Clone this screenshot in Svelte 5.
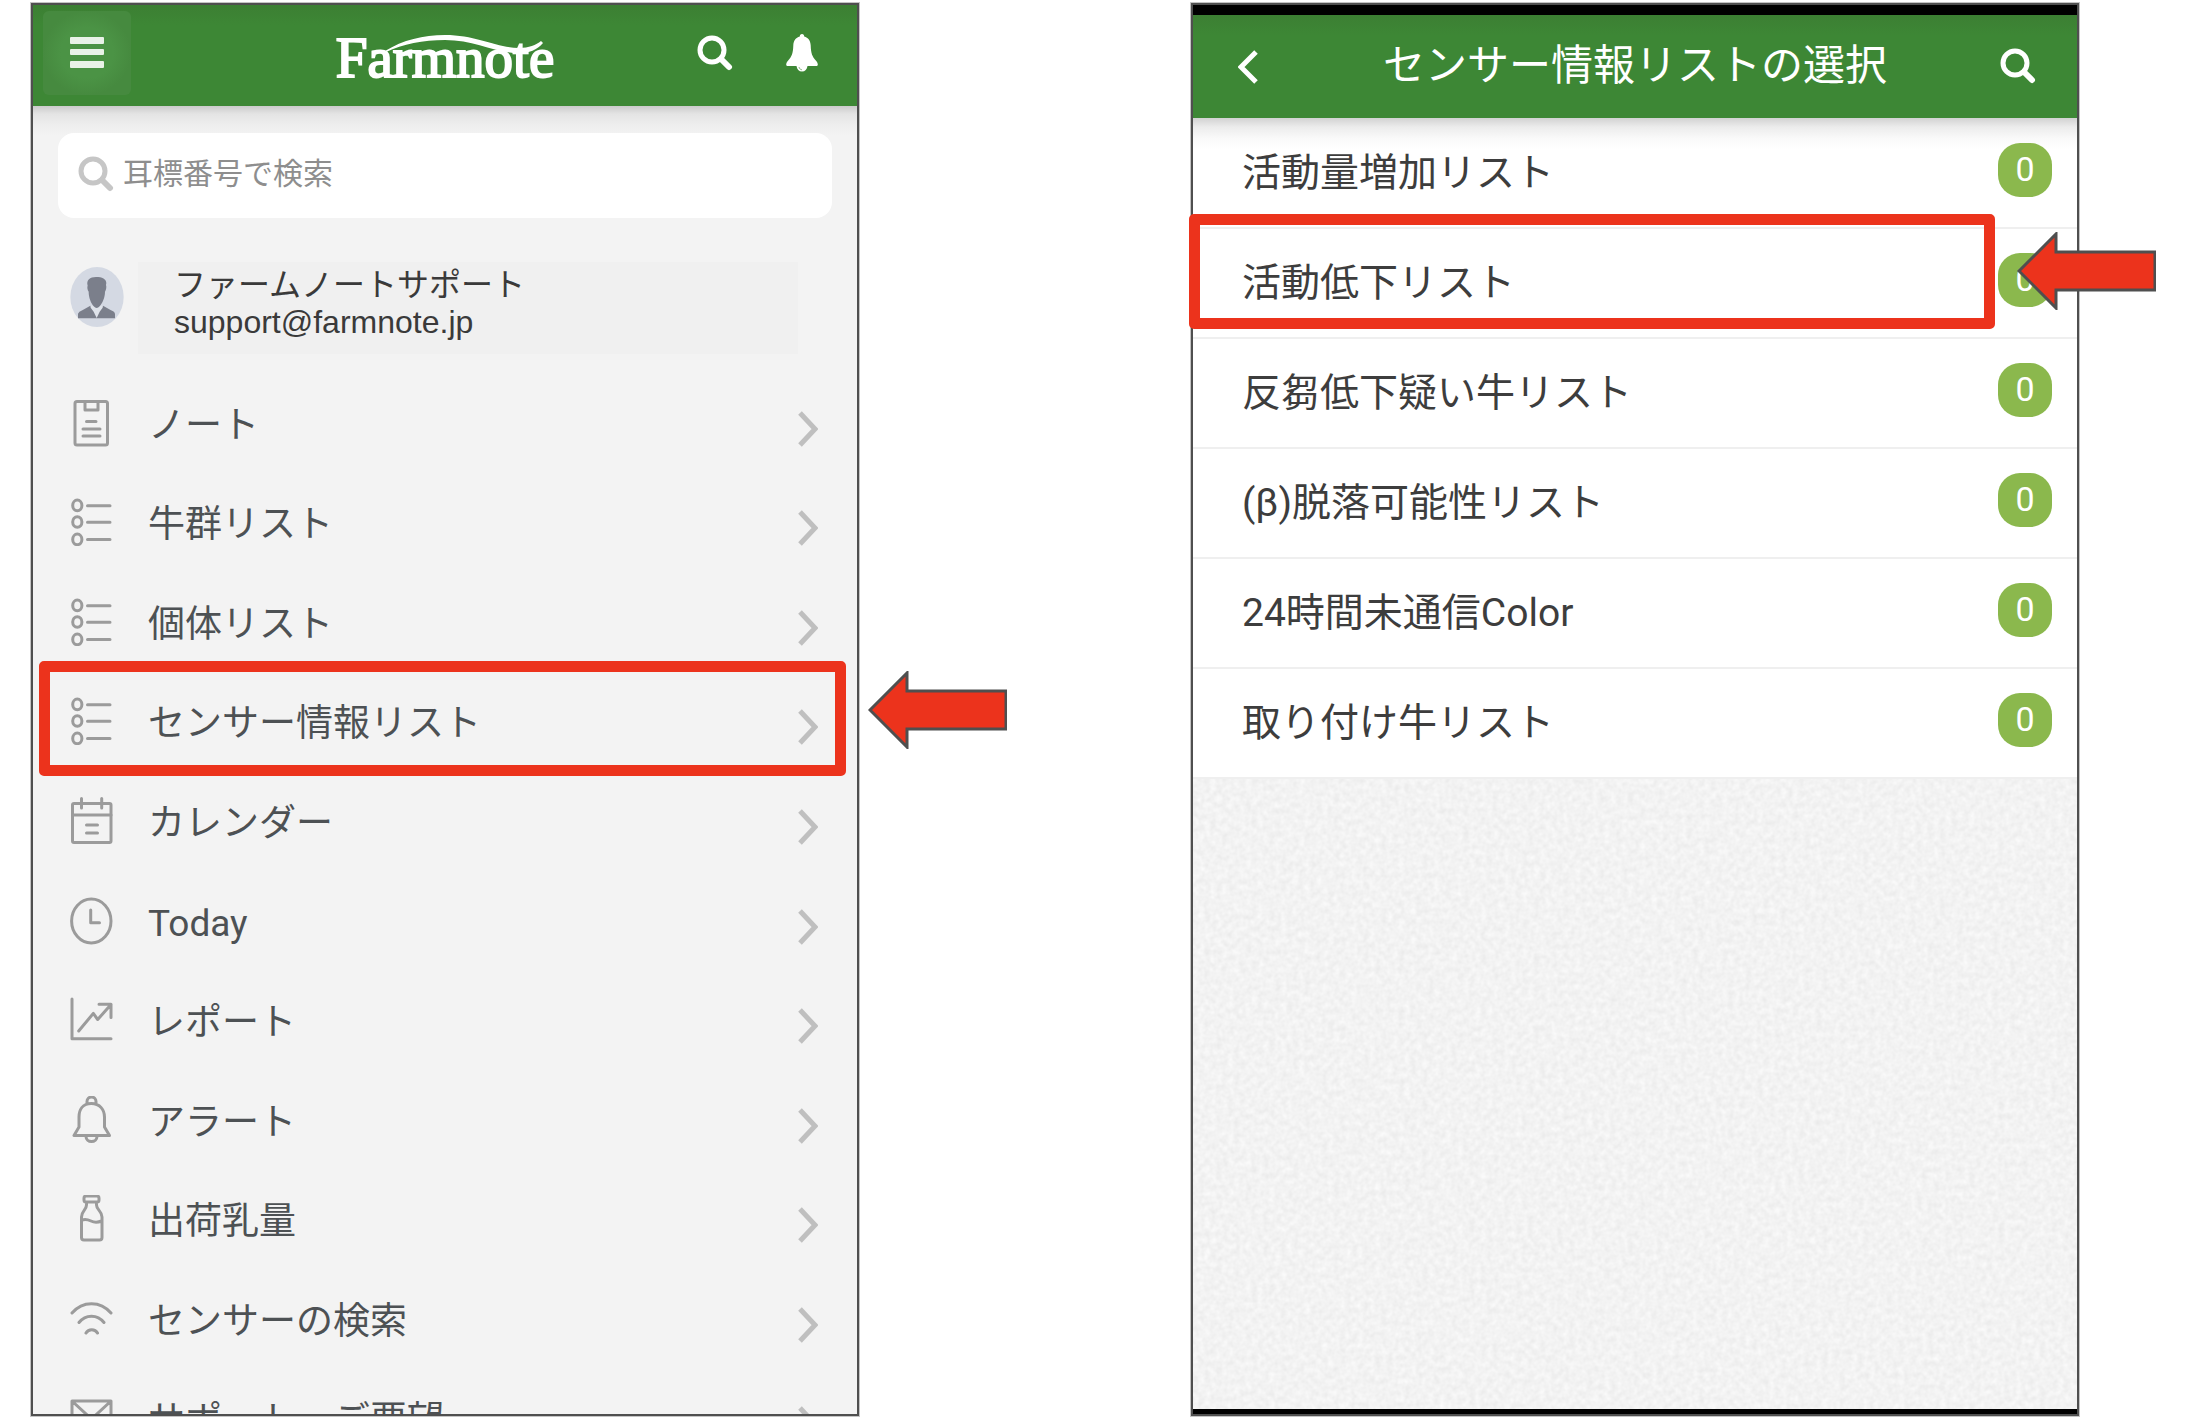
<script>
  const menu = [
    { id: 'note', icon: 'note', label: 'ノート' },
    { id: 'herds', icon: 'list', label: '牛群リスト' },
    { id: 'cattle', icon: 'list', label: '個体リスト' },
    { id: 'sensor-lists', icon: 'list', label: 'センサー情報リスト', marked: true },
    { id: 'calendar', icon: 'calendar', label: 'カレンダー' },
    { id: 'today', icon: 'clock', label: 'Today' },
    { id: 'report', icon: 'chart', label: 'レポート' },
    { id: 'alert', icon: 'bell', label: 'アラート' },
    { id: 'milk', icon: 'bottle', label: '出荷乳量' },
    { id: 'sensor-search', icon: 'wifi', label: 'センサーの検索' },
    { id: 'support', icon: 'mail', label: 'サポート・ご要望' }
  ];

  const lists = [
    { id: 'active-up', label: '活動量増加リスト', count: 0 },
    { id: 'active-down', label: '活動低下リスト', count: 0, marked: true },
    { id: 'rumination', label: '反芻低下疑い牛リスト', count: 0 },
    { id: 'detached', label: '(β)脱落可能性リスト', count: 0 },
    { id: 'offline', label: '24時間未通信Color', count: 0 },
    { id: 'attached', label: '取り付け牛リスト', count: 0 }
  ];
</script>

{#snippet arrow()}
  <svg class="arrow" viewBox="0 0 139 78" aria-hidden="true">
    <path d="M2 39 L39 2 V20 H138 V58 H39 V76 Z" fill="#ec331c" stroke="#4f4f4f" stroke-width="3" />
  </svg>
{/snippet}

{#snippet magnifier()}
  <svg class="magnifier" viewBox="0 0 36 36" aria-hidden="true">
    <circle cx="15" cy="15" r="12" fill="none" stroke="currentColor" stroke-width="5" />
    <path d="M24 24 L32 32" stroke="currentColor" stroke-width="6" stroke-linecap="round" />
  </svg>
{/snippet}

<div class="page">
  <section class="phone home">
    <header class="bar">
      <button class="burger" type="button" aria-label="メニュー">
        <svg viewBox="0 0 34 32" aria-hidden="true">
          <path d="M1 0h32a1 1 0 0 1 1 1v5a1 1 0 0 1-1 1H1a1 1 0 0 1-1-1V1a1 1 0 0 1 1-1zM1 12h32a1 1 0 0 1 1 1v4a1 1 0 0 1-1 1H1a1 1 0 0 1-1-1v-4a1 1 0 0 1 1-1zM1 24h32a1 1 0 0 1 1 1v5a1 1 0 0 1-1 1H1a1 1 0 0 1-1-1v-5a1 1 0 0 1 1-1z" />
        </svg>
      </button>
      <div class="brand">
        Farmnote
        <svg class="swoosh" viewBox="0 0 160 18" aria-hidden="true">
          <path d="M0 16 C18 5 38 0 60 0 C92 0 112 13 134 13 C144 13 151 10 156 6 L158 8 C152 15 144 18 134 18 C110 18 90 5 60 5 C38 5 18 9 1 17 Z" fill="#fff" />
        </svg>
      </div>
      <div class="tools">
        <button type="button" aria-label="検索">{@render magnifier()}</button>
        <button type="button" aria-label="お知らせ">
          <svg class="bell" viewBox="0 0 32 38" aria-hidden="true">
            <path d="M16 0c1.500 0 2.200 1 2.200 2.600 4 .9 6.300 4.400 6.500 8.900.3 7.500 1.300 11 5.500 15.500 1.800 1.900 2.400 5 .2 5H21.500c-.4 3.500-2.500 5.500-5.500 5.500s-5.100-2-5.500-5.500H1.600c-2.200 0-1.600-3.100.2-5 4.200-4.500 5.200-8 5.500-15.500.2-4.500 2.500-8 6.500-8.900C13.800 1 14.500 0 16 0z" fill="#fff" />
            <path d="M13 33c.3 1.600 1.300 2.600 3 2.800" fill="none" stroke="#8fb98a" stroke-width="1" />
          </svg>
        </button>
      </div>
    </header>

    <div class="drawer">
      <label class="search">
        {@render magnifier()}
        <input type="search" placeholder="耳標番号で検索" aria-label="耳標番号で検索" />
      </label>

      <div class="profile">
        <svg class="avatar" viewBox="0 0 160 180" aria-hidden="true">
          <ellipse cx="80" cy="90" rx="80" ry="90" fill="#d4d9e3" />
          <path d="M23 154 V140 Q25 134 36 130 L60 116 H98 L122 130 Q133 134 134 141 V154 Z" fill="#7b7f8b" />
          <path d="M60 115 H98 L97 122 L88 134 L79 153 L70 134 L61 122 Z" fill="#dfe3ea" />
          <path d="M52 56 C47 38 60 29 80 30 C98 28 112 40 107 54 C109 60 108 68 104 74 C104 92 96 108 88 118 Q79 128 70 118 C62 108 55 92 55 74 C51 68 50 60 52 56 Z" fill="#7b7f8b" />
        </svg>
        <div class="who">
          <div>ファームノートサポート</div>
          <div class="mail">support@farmnote.jp</div>
        </div>
      </div>

      <nav class="menu">
        {#each menu as item (item.id)}
          <a class="item" href={'#' + item.id}>
            <svg class="icon" viewBox="0 0 44 48" aria-hidden="true">
              {#if item.icon === 'note'}
                <rect x="5" y="2.500" width="32.500" height="43.500" rx="2" />
                <path d="M15 3V11H28V3M16.500 22.500H26M13 30H30M13 37H30" />
              {:else if item.icon === 'list'}
                <ellipse cx="7.300" cy="7.400" rx="4.600" ry="5.300" />
                <ellipse cx="7.300" cy="24" rx="4.600" ry="5.300" />
                <ellipse cx="7.300" cy="41.400" rx="4.600" ry="5.300" />
                <path d="M17.500 7.700H40M17.500 24.300H40M17.500 41.500H40" />
              {:else if item.icon === 'calendar'}
                <rect x="2.500" y="6.500" width="38.500" height="39" rx="1.500" />
                <path d="M2.500 18H41M11.500 1.500V11M31.700 1.500V11M16.500 28H27.500M16.500 36H27.500" />
              {:else if item.icon === 'clock'}
                <ellipse cx="21.300" cy="24" rx="19.700" ry="22" />
                <path d="M20.700 13V25.700H29.500" />
              {:else if item.icon === 'chart'}
                <path d="M2 3V42.700H41M8.700 35L23.300 17.400L27.700 23.500L41 8.500M29 8.300H41V21.500" />
              {:else if item.icon === 'bell'}
                <path d="M21.300 7.500C12.500 7.500 9 14 9 21V31L4 39.500H39.500L34.500 31V21C34.500 14 30 7.500 21.300 7.500ZM17 8V5.500A4.500 4.500 0 0 1 26 5.500V8M16 40.500A5.500 5 0 0 0 27 40.500" />
              {:else if item.icon === 'bottle'}
                <path d="M16 1H27Q29 1 29 3V5Q29 7 27 7H16Q14 7 14 5V3Q14 1 16 1ZM16.500 7V10C16.500 15 11.500 16 11.500 22V42.500Q11.500 45 14 45H29.500Q32 45 32 42.500V22C32 16 26.500 15 26.500 10V7M12 25C15.500 23.500 18 24.500 21 26C24 27.500 28 27.500 31.500 26" />
              {:else if item.icon === 'wifi'}
                <path d="M2 18C12.500 5.500 30.500 5.500 41 18M9 27.500C15.500 19 27.500 19 34 27.500M16 38C18.500 33.500 25 33.500 27.500 38" />
              {:else}
                <path d="M2 7H41V42H2ZM2.500 7.500L21.500 25L40.500 7.500" />
              {/if}
            </svg>
            <span class="label">{item.label}</span>
            <svg class="next" viewBox="0 0 20 36" aria-hidden="true"><path d="M2 2L17 18L2 34" /></svg>
            {#if item.marked}
              <span class="mark"></span>
              {@render arrow()}
            {/if}
          </a>
        {/each}
      </nav>
    </div>
  </section>

  <section class="phone picker">
    <header class="bar">
      <button type="button" aria-label="戻る">
        <svg class="back" viewBox="0 0 20 34" aria-hidden="true">
          <path d="M18 2L3 17L18 32" fill="none" stroke="#fff" stroke-width="5" />
        </svg>
      </button>
      <h1>センサー情報リストの選択</h1>
      <div class="tools">
        <button type="button" aria-label="検索">{@render magnifier()}</button>
      </div>
    </header>

    <ul class="lists">
      {#each lists as list (list.id)}
        <li>
          <a class="row" href={'#' + list.id}>
            <span class="label">{list.label}</span>
            <span class="count">{list.count}</span>
            {#if list.marked}
              <span class="mark"></span>
              {@render arrow()}
            {/if}
          </a>
        </li>
      {/each}
    </ul>

    <div class="paper">
      <svg aria-hidden="true">
        <filter id="grain" x="0" y="0" width="100%" height="100%" color-interpolation-filters="sRGB">
          <feTurbulence type="fractalNoise" baseFrequency="0.170" numOctaves="2" seed="4" />
          <feColorMatrix
            type="matrix"
            values="0.080 0 0 0 0.911  0.080 0 0 0 0.911  0.080 0 0 0 0.911  0 0 0 0 1"
          />
        </filter>
        <rect width="100%" height="100%" filter="url(#grain)" />
      </svg>
    </div>
  </section>
</div>

<style>
  :global(body) {
    margin: 0;
    background: #fff;
  }

  .page {
    box-sizing: border-box;
    height: 100vh;
    padding: 3px 107px 8px 31px;
    display: grid;
    grid-template-columns: 828fr 888fr;
    grid-template-rows: minmax(0, 1fr);
    column-gap: 332px;
    font-family: Roboto, 'Noto Sans CJK JP', sans-serif;
  }

  .phone {
    box-sizing: border-box;
    border: 2px solid #4f4f4f;
    box-shadow: 0 0 0 1px #c4c4c4;
    display: flex;
    flex-direction: column;
    min-width: 0;
  }

  .home {
    overflow-x: visible;
    overflow-y: clip;
  }

  button {
    margin: 0;
    padding: 0;
    border: 0;
    background: none;
    color: inherit;
    display: flex;
    align-items: center;
    justify-content: center;
  }

  a {
    color: inherit;
    text-decoration: none;
  }

  .bar {
    flex: none;
    box-sizing: border-box;
    display: grid;
    grid-template-columns: 1fr auto 1fr;
    align-items: center;
    justify-items: start;
    color: #fff;
    background: linear-gradient(#3c7f33, #3d8735 20px);
  }

  .home .bar {
    height: 101px;
    padding: 0 39px 5px;
  }

  .burger {
    width: 88px;
    height: 84px;
    margin-left: -29px;
    border-radius: 6px;
    background: radial-gradient(closest-side, #4b9345 60%, #468a3f);
  }

  .burger svg {
    width: 34px;
    height: 32px;
    fill: #e9f2e8;
  }

  .brand {
    position: relative;
    font-family: 'Liberation Serif', serif;
    font-size: 57px;
    line-height: 64px;
    padding-top: 10px;
    -webkit-text-stroke: 2px #fff;
  }

  .swoosh {
    position: absolute;
    left: 49px;
    top: 19px;
    width: 160px;
    height: 18px;
  }

  .tools {
    justify-self: end;
    display: flex;
    align-items: center;
    gap: 53px;
  }

  .magnifier {
    width: 36px;
    height: 36px;
    display: block;
  }

  .bell {
    width: 32px;
    height: 38px;
  }

  .drawer {
    flex: 1;
    min-height: 0;
    display: flex;
    flex-direction: column;
    color: #4d5154;
    background: linear-gradient(#cbcbcb, #e4e4e4 8px, #ededed 18px, #f3f3f3 30px);
  }

  .search {
    flex: none;
    box-sizing: border-box;
    height: 85px;
    margin: 27px 25px 0;
    padding: 0 20px 4px;
    display: flex;
    align-items: center;
    gap: 9px;
    border-radius: 16px;
    background: #fff;
    color: #c6c6c6;
  }

  .search input {
    flex: 1;
    min-width: 0;
    height: 48px;
    padding: 0;
    border: 0;
    outline: 0;
    background: none;
    font-family: inherit;
    font-size: 30px;
    color: #4d5154;
  }

  .search input::placeholder {
    color: #8e8e8e;
    opacity: 1;
  }

  .profile {
    flex: none;
    margin: 44px 59px 19px 37px;
    display: flex;
    align-items: flex-start;
    gap: 14px;
  }

  .avatar {
    flex: none;
    width: 54px;
    height: 60px;
    padding-top: 5px;
  }

  .who {
    flex: 1;
    padding: 0 0 12px 36px;
    background: #f0f0f0;
    color: #3a3a3a;
    font-family: 'Noto Sans CJK JP', sans-serif;
    font-size: 32px;
    line-height: 40px;
  }

  .mail {
    font-family: 'Liberation Sans', Arial, sans-serif;
  }

  /* The list runs past the lower edge, so its last row is cut off. */
  .menu {
    flex: 1;
    display: flex;
    flex-direction: column;
    margin-bottom: -54px;
  }

  .item {
    flex: 1;
    position: relative;
    display: flex;
    align-items: center;
    padding: 0 39px 0 37px;
    gap: 34px;
    font-size: 37px;
    line-height: 48px;
  }

  .icon {
    flex: none;
    width: 44px;
    height: 48px;
    fill: none;
    stroke: #9b9b9b;
    stroke-width: 3;
    stroke-linecap: round;
    stroke-linejoin: round;
  }

  .label {
    flex: 1;
  }

  .item .label {
    padding-top: 6px;
  }

  .next {
    flex: none;
    width: 20px;
    height: 36px;
    padding-top: 12px;
    fill: none;
    stroke: #bfbfbf;
    stroke-width: 5;
  }

  .mark {
    position: absolute;
    box-sizing: border-box;
    border: 11px solid #ec331c;
    border-radius: 5px;
  }

  .item .mark {
    inset: -11px 11px -5px 6px;
  }

  .arrow {
    position: absolute;
    width: 139px;
    height: 78px;
  }

  .item .arrow {
    left: calc(100% + 11px);
    top: -1px;
  }

  .picker {
    background: #000;
    padding: 10px 0 5px;
  }

  .picker .bar {
    height: 103px;
    padding: 0 41px 2px;
  }

  .back {
    width: 20px;
    height: 34px;
    padding: 3px 0 0 4px;
  }

  h1 {
    margin: 0;
    font-size: 42px;
    line-height: 56px;
    font-weight: 400;
  }

  .lists {
    flex: none;
    margin: 0;
    padding: 1px 0 0;
    list-style: none;
    color: #3d3d3d;
    background: linear-gradient(#d2d2d2, #ececec 9px, #f9f9f9 20px, #fff 32px);
  }

  .row {
    position: relative;
    box-sizing: border-box;
    height: 110px;
    padding: 0 25px 0 49px;
    display: flex;
    align-items: center;
    border-bottom: 2px solid #efefef;
    font-size: 39px;
    line-height: 56px;
  }

  .count {
    width: 54px;
    height: 54px;
    margin-bottom: 7px;
    border-radius: 22px;
    background: #8bb84d;
    color: #fff;
    font-size: 34px;
    line-height: 52px;
    text-align: center;
  }

  .row .mark {
    inset: -15px 82px 8px -4px;
  }

  .row .arrow {
    right: -79px;
    top: 3px;
  }

  .paper {
    flex: 1;
    min-height: 0;
    background: #f3f3f3;
  }

  .paper svg {
    display: block;
    width: 100%;
    height: 100%;
  }
</style>
